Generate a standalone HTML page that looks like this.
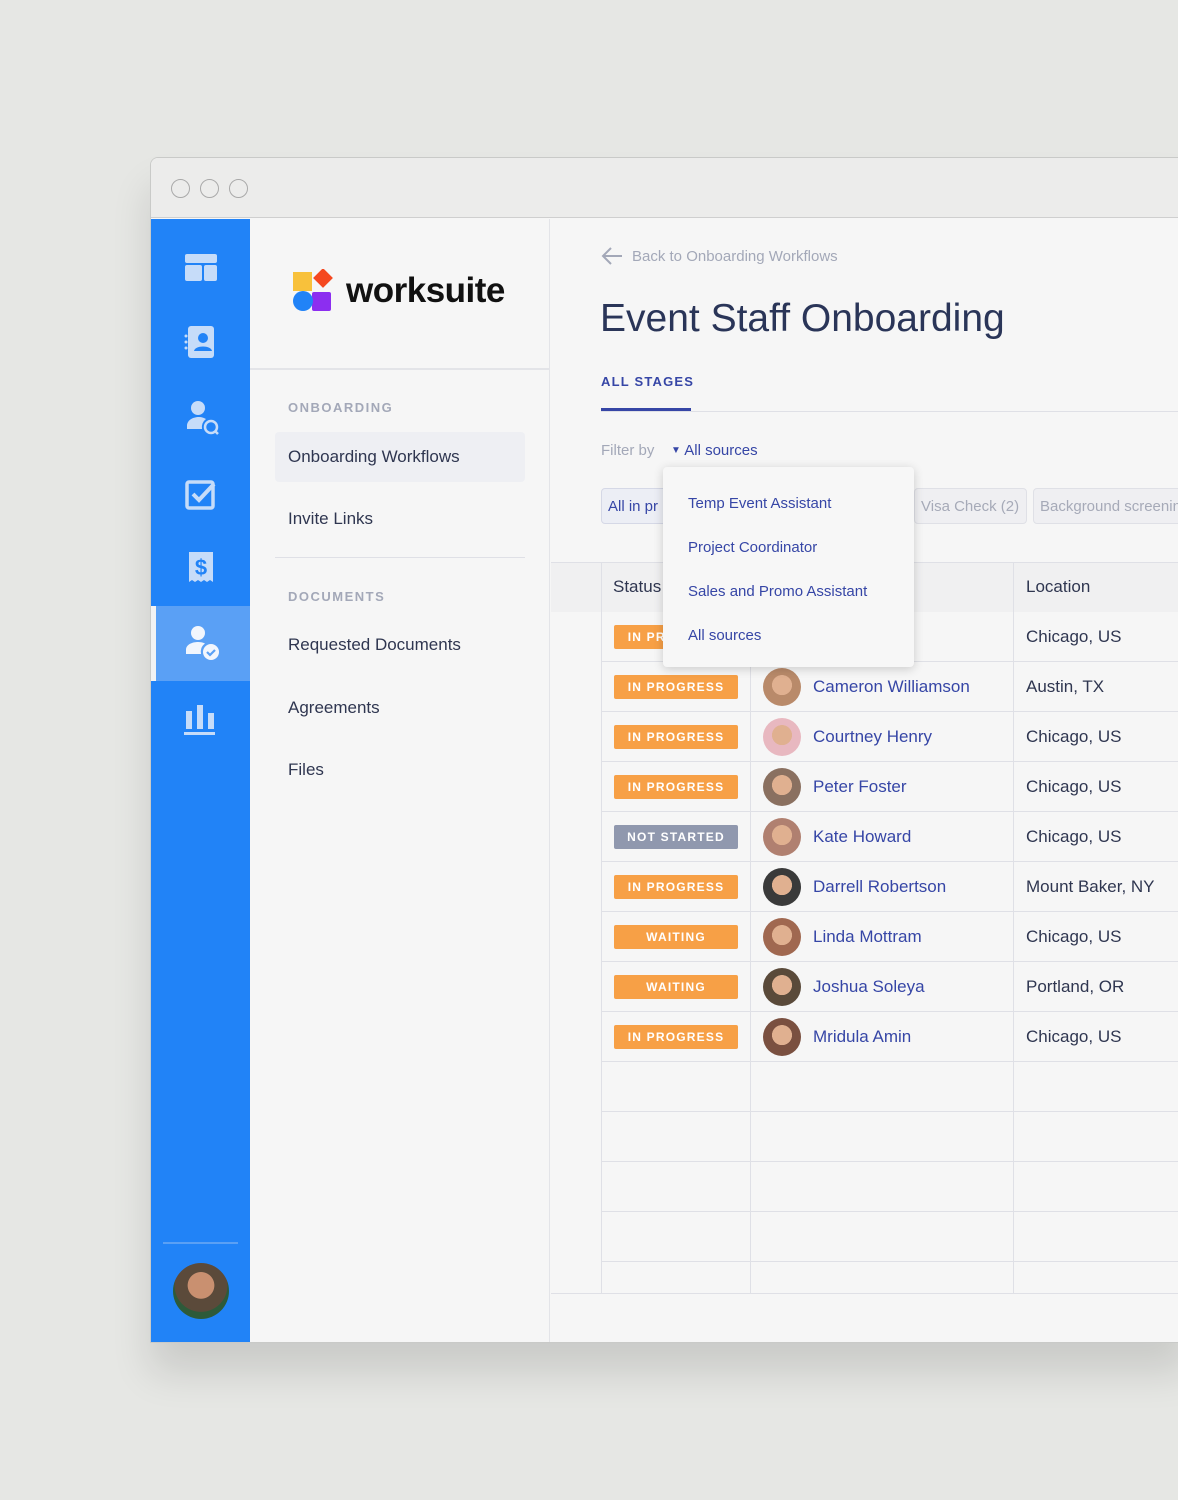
<!DOCTYPE html>
<html><head><style>
*{box-sizing:border-box;margin:0;padding:0}
body{width:1178px;height:1500px;background:#e6e7e4;font-family:"Liberation Sans",sans-serif;position:relative;overflow:hidden}
.abs{position:absolute}
.win{left:150px;top:157px;width:1040px;height:1186px;background:#f6f6f6;border:1px solid #c9cac8;border-radius:8px 0 0 0;box-shadow:0 30px 40px rgba(0,0,0,.12);overflow:hidden}
.top{left:0;top:0;width:100%;height:60px;background:#ececeb;border-bottom:1px solid #cfcfcf}
.dot{top:21px;width:19px;height:19px;border:1.5px solid #a9a9a9;border-radius:50%}
.side{left:0;top:61px;width:99px;height:1125px;background:#2183f7}
.ic{left:32px;width:36px;height:36px}
.sec{left:99px;top:61px;width:300px;height:1125px;background:#f6f6f6;border-right:1px solid #e3e4e8}
.lbl{font-size:13px;letter-spacing:1.5px;font-weight:bold;color:#a3a8b8}
.nav{font-size:17px;color:#2f3650}
.main{left:400px;top:61px;width:640px;height:1125px}
.chip{top:269px;height:36px;border:1px solid #dfe0e6;border-radius:4px;background:#efeff2;font-size:15px;color:#a6aab8;padding:9px 6px;white-space:nowrap;overflow:hidden}
.badge{width:124px;height:24px;border-radius:2px;background:#f7a046;color:#fff;font-size:12px;font-weight:bold;letter-spacing:1.2px;text-align:center;line-height:24px}
.name{font-size:17px;color:#3646a6}
.loc{font-size:17px;color:#2f3650}
.av{width:38px;height:38px;border-radius:50%}
.dd div{position:absolute;left:25px;font-size:15px;color:#3646a6}
</style></head><body>
<div class="abs win">
 <div class="abs top">
  <div class="abs dot" style="left:20px"></div><div class="abs dot" style="left:49px"></div><div class="abs dot" style="left:78px"></div>
 </div>
 <div class="abs side">
  <svg class="abs ic" style="top:32px" viewBox="0 0 36 36"><g fill="#c6dcf9"><rect x="2" y="3" width="32" height="9" rx="2"/><rect x="2" y="14" width="17" height="16" rx="2"/><rect x="21" y="14" width="13" height="16" rx="2"/></g></svg>
  <svg class="abs ic" style="top:105px" viewBox="0 0 36 36"><g fill="#c6dcf9"><rect x="5" y="2" width="26" height="32" rx="3"/></g><circle cx="20" cy="14" r="5" fill="#2183f7"/><path d="M11 27c1-6 17-6 18 0z" fill="#2183f7"/><circle cx="3" cy="12" r="1.5" fill="#c6dcf9"/><circle cx="3" cy="18" r="1.5" fill="#c6dcf9"/><circle cx="3" cy="24" r="1.5" fill="#c6dcf9"/></svg>
  <svg class="abs ic" style="top:180px" viewBox="0 0 36 36"><g fill="#c6dcf9"><circle cx="15" cy="9" r="7"/><path d="M4 30v-3c0-6 6-9 12-9 3 0 5 1 7 2a10 10 0 0 0-4 10z"/></g><circle cx="28" cy="28" r="6" fill="none" stroke="#c6dcf9" stroke-width="2.5"/><path d="M32 32l3 3" stroke="#c6dcf9" stroke-width="2.5"/></svg>
  <svg class="abs ic" style="top:257px" viewBox="0 0 36 36"><rect x="4" y="6" width="26" height="26" rx="2" fill="none" stroke="#c6dcf9" stroke-width="3.5"/><path d="M10 18l6 6 15-16" fill="none" stroke="#c6dcf9" stroke-width="4"/></svg>
  <svg class="abs ic" style="top:331px" viewBox="0 0 36 36"><path d="M6 2h24v30l-3-2-3 2-3-2-3 2-3-2-3 2-3-2-3 2z" fill="#c6dcf9"/><text x="18" y="25" font-size="22" font-weight="bold" text-anchor="middle" fill="#2183f7" font-family="Liberation Sans">$</text></svg>
  <div class="abs" style="left:0;top:387px;width:99px;height:75px;background:#5aa0f5"></div>
  <div class="abs" style="left:0;top:387px;width:5px;height:75px;background:#f3f3f3"></div>
  <svg class="abs ic" style="top:406px" viewBox="0 0 36 36"><g fill="#f2f6fd"><circle cx="15" cy="8" r="7"/><path d="M3 29v-4c0-6 7-8 12-8 3 0 5 .5 7 1.5A10 10 0 0 0 18 29z"/><circle cx="28" cy="27" r="8"/></g><path d="M24 27l3 3 5-5" fill="none" stroke="#5aa0f5" stroke-width="2.2"/></svg>
  <svg class="abs ic" style="top:482px" viewBox="0 0 36 36"><g fill="#c6dcf9"><rect x="3" y="10" width="6" height="18"/><rect x="14" y="4" width="6" height="24"/><rect x="25" y="12" width="6" height="16"/><rect x="1" y="31" width="31" height="3"/></g></svg>
  <div class="abs" style="left:12px;top:1023px;width:75px;height:2px;background:#5aa0f5"></div>
  <div class="abs" style="left:22px;top:1044px;width:56px;height:56px;border-radius:50%;background:radial-gradient(circle at 50% 40%,#c99070 0 30%,#5b4a3a 31% 60%,#2d5a3a 61%)"></div>
 </div>
 <div class="abs sec">
  <svg class="abs" style="left:42px;top:50px" width="44" height="44" viewBox="0 0 44 44"><rect x="1" y="3" width="19" height="19" fill="#f8c13b"/><rect x="24" y="2" width="14" height="14" fill="#f5481f" transform="rotate(45 31 9)"/><rect x="20" y="23" width="19" height="19" rx="2" fill="#8c2ef0"/><circle cx="11" cy="32" r="10" fill="#2183f7"/></svg>
  <div class="abs" style="left:96px;top:52px;font-size:35px;font-weight:bold;color:#111;letter-spacing:-.5px">worksuite</div>
  <div class="abs" style="left:0;top:149px;width:300px;height:2px;background:#e3e4e8"></div>
  <div class="abs lbl" style="left:38px;top:181px">ONBOARDING</div>
  <div class="abs" style="left:25px;top:213px;width:250px;height:50px;background:#eeeff3;border-radius:4px"></div>
  <div class="abs nav" style="left:38px;top:228px">Onboarding Workflows</div>
  <div class="abs nav" style="left:38px;top:290px">Invite Links</div>
  <div class="abs" style="left:25px;top:338px;width:250px;height:1px;background:#dfe0e6"></div>
  <div class="abs lbl" style="left:38px;top:370px">DOCUMENTS</div>
  <div class="abs nav" style="left:38px;top:416px">Requested Documents</div>
  <div class="abs nav" style="left:38px;top:479px">Agreements</div>
  <div class="abs nav" style="left:38px;top:541px">Files</div>
 </div>
 <div class="abs main">
  <svg class="abs" style="left:50px;top:27px" width="22" height="20" viewBox="0 0 22 20"><path d="M21 10H3M10 2L2 10l8 8" fill="none" stroke="#a3a8b8" stroke-width="2"/></svg>
  <div class="abs" style="left:81px;top:29px;font-size:15px;color:#a3a8b8">Back to Onboarding Workflows</div>
  <div class="abs" style="left:49px;top:78px;font-size:39px;color:#2a3558">Event Staff Onboarding</div>
  <div class="abs" style="left:50px;top:155px;font-size:13px;font-weight:bold;letter-spacing:1.2px;color:#3646a6">ALL STAGES</div>
  <div class="abs" style="left:50px;top:189px;width:90px;height:3px;background:#3646a6"></div>
  <div class="abs" style="left:50px;top:192px;width:600px;height:1px;background:#dfe0e6"></div>
  <div class="abs" style="left:50px;top:223px;font-size:15px;color:#a3a8b8">Filter by</div>
  <div class="abs" style="left:120px;top:223px;font-size:15px;color:#3646a6"><span style="font-size:10px;position:relative;top:-2px">▼</span> All sources</div>
  <div class="abs chip" style="left:50px;width:70px;color:#3646a6;background:#eceef5;border-color:#d5d8e6">All in pr</div>
  <div class="abs chip" style="left:363px;width:113px">Visa Check (2)</div>
  <div class="abs chip" style="left:482px;width:170px">Background screening</div>
  <!-- table -->
  <div class="abs" style="left:0;top:343px;width:640px;height:1px;background:#dfe0e6"></div>
  <div class="abs" style="left:0;top:344px;width:640px;height:49px;background:#f0f0f1"></div>
  <div class="abs" style="left:62px;top:358px;font-size:17px;color:#2f3650">Status</div>
  <div class="abs" style="left:475px;top:358px;font-size:17px;color:#2f3650">Location</div>
  <div class="abs" style="left:50px;top:343px;width:1px;height:731px;background:#dfe0e6"></div>
  <div class="abs" style="left:199px;top:393px;width:1px;height:681px;background:#dfe0e6"></div>
  <div class="abs" style="left:462px;top:343px;width:1px;height:731px;background:#dfe0e6"></div>
  <div class="abs" style="left:0;top:1074px;width:640px;height:1px;background:#dfe0e6"></div>
  <div id="rows"></div>
  <!-- dropdown -->
  <div class="abs dd" style="left:112px;top:248px;width:251px;height:200px;background:#f7f7f7;border-radius:4px;box-shadow:0 2px 10px rgba(0,0,0,.18)">
   <div style="top:28px">Temp Event Assistant</div>
   <div style="top:72px">Project Coordinator</div>
   <div style="top:116px">Sales and Promo Assistant</div>
   <div style="top:160px">All sources</div>
  </div>
 </div>
</div>
<script>
var d=[["IN PROGRESS","","Chicago, US"],["IN PROGRESS","Cameron Williamson","Austin, TX"],["IN PROGRESS","Courtney Henry","Chicago, US"],["IN PROGRESS","Peter Foster","Chicago, US"],["NOT STARTED","Kate Howard","Chicago, US"],["IN PROGRESS","Darrell Robertson","Mount Baker, NY"],["WAITING","Linda Mottram","Chicago, US"],["WAITING","Joshua Soleya","Portland, OR"],["IN PROGRESS","Mridula Amin","Chicago, US"]];
var av=["#b98a6a","#e8b8c0","#8a7060","#b08070","#3a3a3a","#a06850","#5a4a3a","#7a5040"];
var h="";
for(var i=0;i<13;i++){var t=393+i*50;
h+='<div class="abs" style="left:50px;top:'+(t+49)+'px;width:590px;height:1px;background:#dfe0e6"></div>';
if(i<9){var r=d[i];
h+='<div class="abs badge" style="left:63px;top:'+(t+13)+'px;background:'+(r[0]=="NOT STARTED"?"#9098ae":"#f7a046")+'">'+r[0]+'</div>';
if(r[1]){h+='<div class="abs av" style="left:212px;top:'+(t+6)+'px;background:radial-gradient(circle at 50% 45%,#e0b090 0 35%,'+av[i-1]+' 36%)"></div><div class="abs name" style="left:262px;top:'+(t+15)+'px">'+r[1]+'</div>';}
h+='<div class="abs loc" style="left:475px;top:'+(t+15)+'px">'+r[2]+'</div>';}}
document.getElementById("rows").innerHTML=h;
</script>
</body></html>
